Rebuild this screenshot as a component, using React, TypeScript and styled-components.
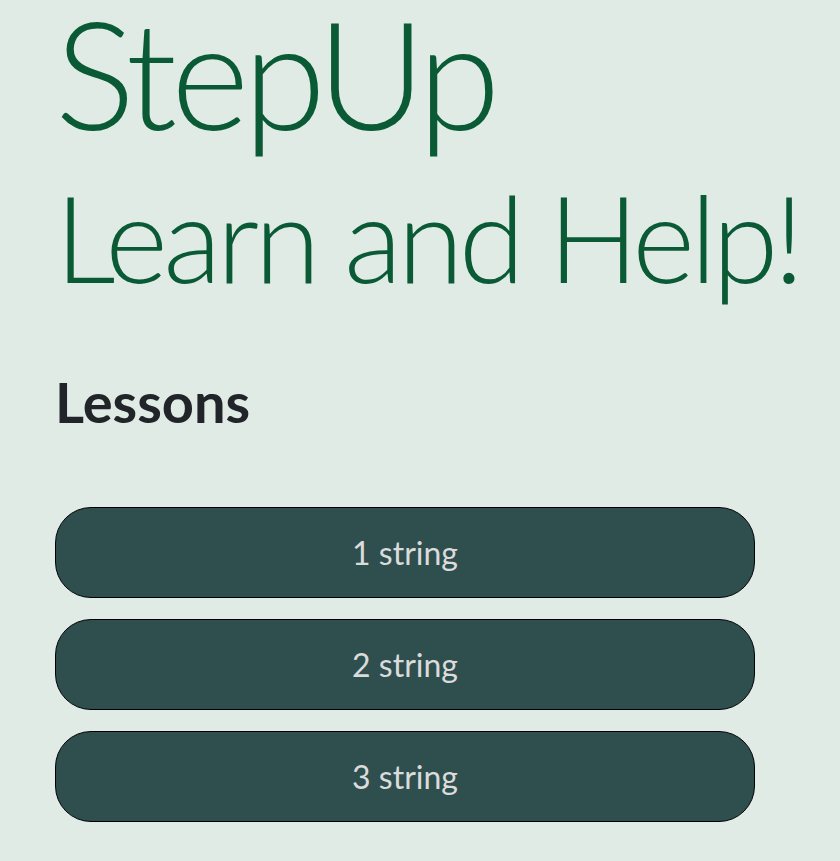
import styled, { createGlobalStyle } from "styled-components";

const GlobalStyle = createGlobalStyle`
  html, body {
    margin: 0;
    padding: 0;
    background: #e1ebe6;
  }
  body {
    font-family: Lato, "Open Sans", sans-serif;
  }
`;

const Page = styled.div`
  width: 840px;
  height: 861px;
  overflow: hidden;
  padding: 0 0 0 55px;
  box-sizing: border-box;
  display: flex;
  flex-direction: column;
`;

const Title = styled.h1`
  margin: 0;
  font-size: 150px;
  font-weight: 300;
  line-height: 144px;
  letter-spacing: -6px;
  white-space: nowrap;
  color: #0b5a36;
`;

const Subtitle = styled.h2`
  margin: 33px 0 0 0;
  font-size: 120px;
  font-weight: 300;
  line-height: 1;
  letter-spacing: -4.6px;
  white-space: nowrap;
  color: #0b5a36;
`;

const Heading = styled.h3`
  margin: 77px 0 0 0;
  font-size: 56px;
  font-weight: 700;
  line-height: 1;
  color: #212529;
`;

const LessonList = styled.div`
  margin-top: 77px;
  width: 700px;
  display: flex;
  flex-direction: column;
  gap: 21px;
`;

const LessonButton = styled.button`
  height: 91px;
  border: 1.5px solid #000;
  border-radius: 36px;
  background: #2f4f4f;
  color: #dadcdc;
  font-family: Lato, "Open Sans", sans-serif;
  font-size: 32px;
  cursor: pointer;
`;

const lessons = ["1 string", "2 string", "3 string"];

export default function App() {
  return (
    <>
      <GlobalStyle />
      <Page>
        <Title>StepUp</Title>
        <Subtitle>Learn and Help!</Subtitle>
        <Heading>Lessons</Heading>
        <LessonList>
          {lessons.map((item, idx) => (
            <LessonButton key={idx}>{item}</LessonButton>
          ))}
        </LessonList>
      </Page>
    </>
  );
}
